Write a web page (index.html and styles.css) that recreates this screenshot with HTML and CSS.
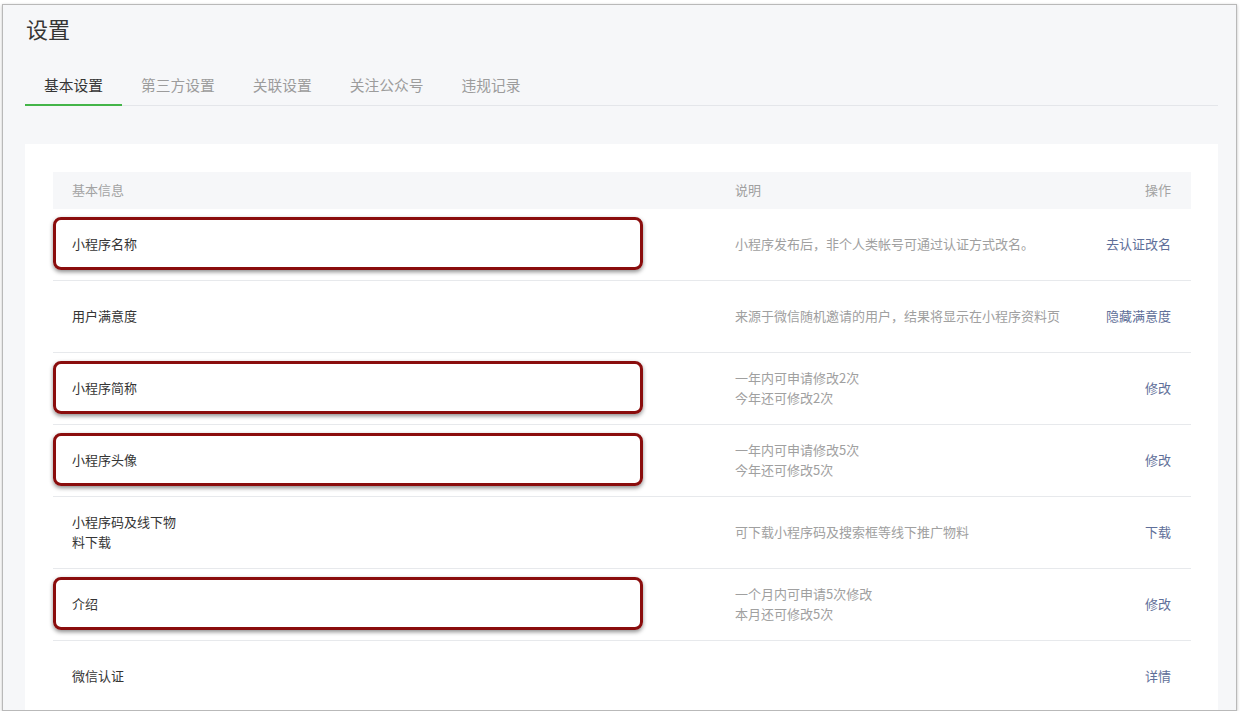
FILE: index.html
```html
<!DOCTYPE html>
<html lang="zh-CN">
<head>
  <meta charset="UTF-8">
  <title>设置</title>
  <link rel="stylesheet" href="styles.css">
</head>
<body>
  <div class="window">
    <div class="page-head">
      <h1 class="page-title">设置</h1>
      <ul class="tabs">
        <li class="tab active">基本设置</li>
        <li class="tab">第三方设置</li>
        <li class="tab">关联设置</li>
        <li class="tab">关注公众号</li>
        <li class="tab">违规记录</li>
      </ul>
    </div>

    <div class="card">
      <div class="table">
        <div class="row head">
          <div class="cell name">基本信息</div>
          <div class="cell desc">说明</div>
          <div class="cell action">操作</div>
        </div>

        <div class="row">
          <div class="cell name">小程序名称</div>
          <div class="cell desc">小程序发布后，非个人类帐号可通过认证方式改名。</div>
          <div class="cell action"><a>去认证改名</a></div>
          <span class="mark"></span>
        </div>

        <div class="row">
          <div class="cell name">用户满意度</div>
          <div class="cell desc">来源于微信随机邀请的用户，结果将显示在小程序资料页</div>
          <div class="cell action"><a>隐藏满意度</a></div>
        </div>

        <div class="row">
          <div class="cell name">小程序简称</div>
          <div class="cell desc">一年内可申请修改2次<br>今年还可修改2次</div>
          <div class="cell action"><a>修改</a></div>
          <span class="mark"></span>
        </div>

        <div class="row">
          <div class="cell name">小程序头像</div>
          <div class="cell desc">一年内可申请修改5次<br>今年还可修改5次</div>
          <div class="cell action"><a>修改</a></div>
          <span class="mark"></span>
        </div>

        <div class="row">
          <div class="cell name"><span class="wrap">小程序码及线下物料下载</span></div>
          <div class="cell desc">可下载小程序码及搜索框等线下推广物料</div>
          <div class="cell action"><a>下载</a></div>
        </div>

        <div class="row">
          <div class="cell name">介绍</div>
          <div class="cell desc">一个月内可申请5次修改<br>本月还可修改5次</div>
          <div class="cell action"><a>修改</a></div>
          <span class="mark"></span>
        </div>

        <div class="row">
          <div class="cell name">微信认证</div>
          <div class="cell desc"></div>
          <div class="cell action"><a>详情</a></div>
        </div>
      </div>
    </div>
  </div>
</body>
</html>
```

FILE: styles.css
```css
body {
  margin: 0;
  padding: 0;
  background: #fff;
  font-family: "Noto Sans CJK SC", "Noto Sans", sans-serif;
  color: #353535;
  overflow: hidden;
}
.window {
  margin: 4px 0 0 2px;
  width: 1235px;
  height: 707px;
  border: 1px solid #b9b9b9;
  box-shadow: 0 1px 3px rgba(0, 0, 0, 0.25);
  background: #f6f7f9;
  padding: 0 18px 0 22px;
  box-sizing: border-box;
  overflow: hidden;
}
.page-head {
  padding-top: 8px;
}
.page-title {
  margin: 0;
  font-size: 22px;
  font-weight: normal;
  line-height: 30px;
  padding-left: 1px;
}
.tabs {
  display: flex;
  margin: 23px 0 0;
  padding: 0;
  list-style: none;
  border-bottom: 1px solid #e4e6ea;
}
.tab {
  font-size: 14.75px;
  line-height: 38px;
  padding: 0 19px 0 19px;
  color: #9c9c9c;
  border-bottom: 2px solid transparent;
  margin-bottom: -1px;
}
.tab.active {
  color: #353535;
  border-bottom-color: #44b549;
}
.card {
  margin-top: 38px;
  background: #fff;
  padding: 28px 27px 40px 28px;
}
.table {
  font-size: 13px;
  line-height: 20px;
}
.row {
  position: relative;
  display: grid;
  grid-template-columns: 682px 1fr auto;
  align-items: center;
  height: 71px;
  border-bottom: 1px solid #e7e9ec;
}
.row.head {
  height: 37px;
  border-bottom: none;
  background: #f6f7f9;
  color: #a3a3a3;
}
.cell {
  padding-bottom: 2px;
}
.cell.name {
  padding-left: 19px;
}
.wrap {
  display: block;
  width: 110px;
}
.desc {
  color: #a0a0a0;
}
.action {
  text-align: right;
  padding-right: 20px;
}
.action a {
  color: #5f6f99;
}
.row.head .action {
  color: #a3a3a3;
}
.mark {
  position: absolute;
  left: 0;
  top: 8px;
  width: 590px;
  height: 53px;
  box-sizing: border-box;
  border: 3px solid #8a0d0d;
  border-radius: 8px;
  box-shadow: 0 2px 4px rgba(0, 0, 0, 0.45);
}
```
